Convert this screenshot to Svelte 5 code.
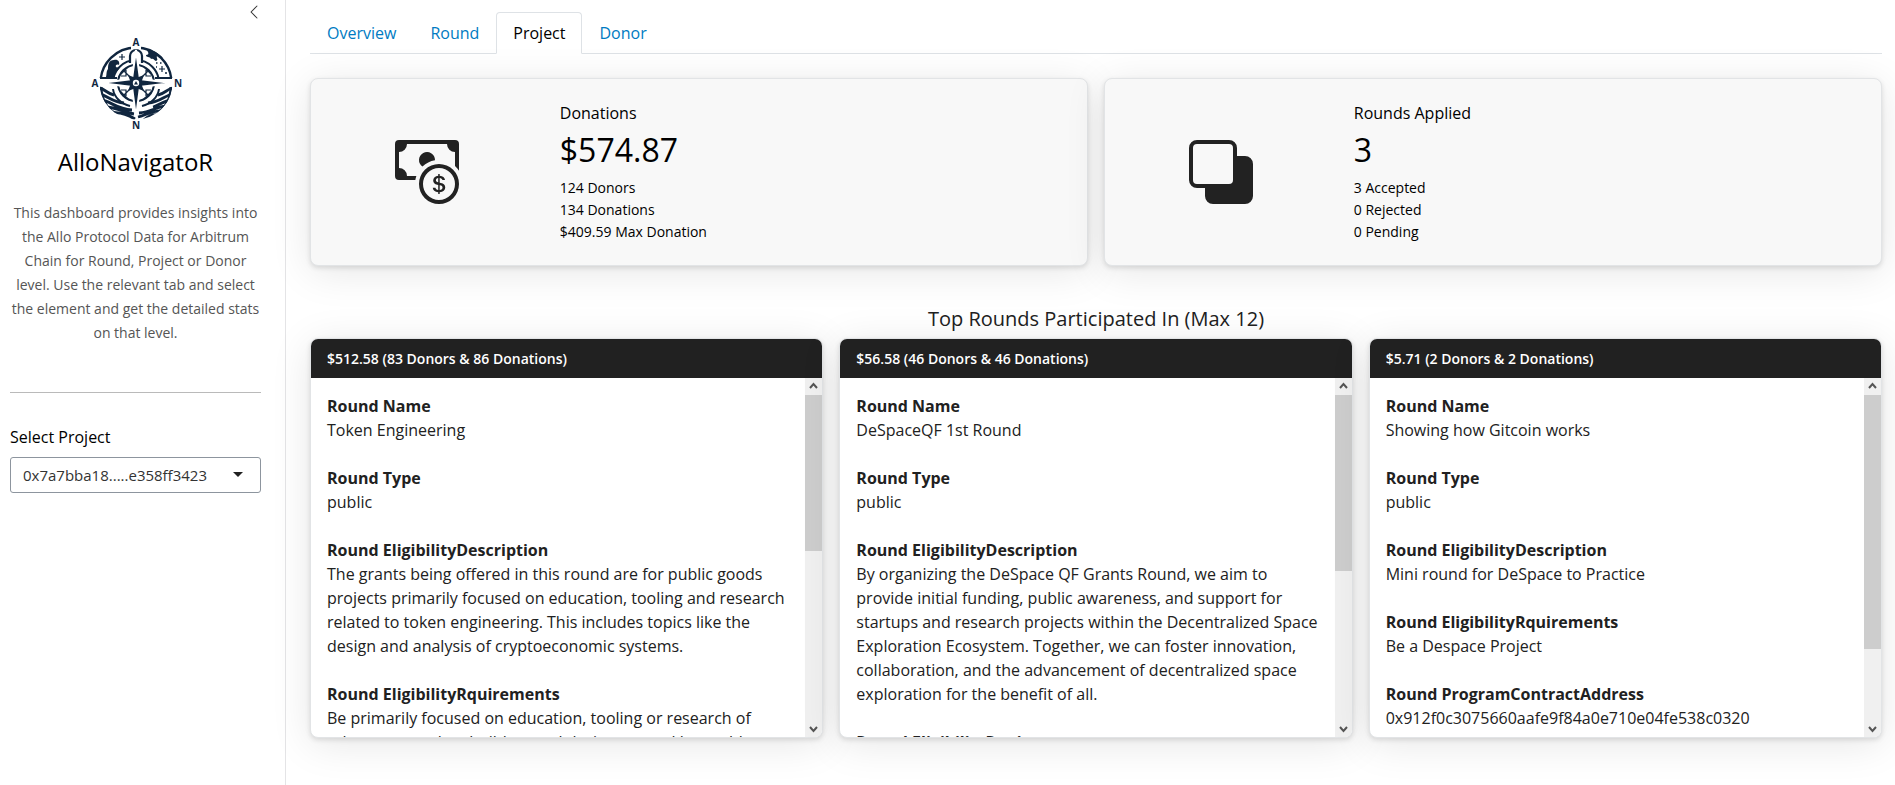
<script>
  const tabs = ['Overview', 'Round', 'Project', 'Donor'];
  let active = $state('Project');
  let project = $state('0x7a7bba18.....e358ff3423');

  const stats = [
    {
      title: 'Donations',
      value: '$574.87',
      notes: ['124 Donors', '134 Donations', '$409.59 Max Donation'],
      icon: 'cash'
    },
    {
      title: 'Rounds Applied',
      value: '3',
      notes: ['3 Accepted', '0 Rejected', '0 Pending'],
      icon: 'stack'
    }
  ];

  const rounds = [
    {
      head: '$512.58 (83 Donors & 86 Donations)',
      thumb: 48,
      fields: [
        ['Round Name', 'Token Engineering'],
        ['Round Type', 'public'],
        ['Round EligibilityDescription', 'The grants being offered in this round are for public goods projects primarily focused on education, tooling and research related to token engineering. This includes topics like the design and analysis of cryptoeconomic systems.'],
        ['Round EligibilityRquirements', 'Be primarily focused on education, tooling or research of relevance to token builders and designers, and be usable']
      ]
    },
    {
      head: '$56.58 (46 Donors & 46 Donations)',
      thumb: 54,
      fields: [
        ['Round Name', 'DeSpaceQF 1st Round'],
        ['Round Type', 'public'],
        ['Round EligibilityDescription', 'By organizing the DeSpace QF Grants Round, we aim to provide initial funding, public awareness, and support for startups and research projects within the Decentralized Space Exploration Ecosystem. Together, we can foster innovation, collaboration, and the advancement of decentralized space exploration for the benefit of all.'],
        ['Round EligibilityRquirements', '']
      ]
    },
    {
      head: '$5.71 (2 Donors & 2 Donations)',
      thumb: 78,
      fields: [
        ['Round Name', 'Showing how Gitcoin works'],
        ['Round Type', 'public'],
        ['Round EligibilityDescription', 'Mini round for DeSpace to Practice'],
        ['Round EligibilityRquirements', 'Be a Despace Project'],
        ['Round ProgramContractAddress', '0x912f0c3075660aafe9f84a0e710e04fe538c0320']
      ]
    }
  ];
</script>

<div class="page">
  <aside>
    <button class="collapse" aria-label="Toggle sidebar">
      <svg width="16" height="16" viewBox="0 0 16 16" fill="currentColor">
        <path fill-rule="evenodd" d="M11.354 1.646a.5.5 0 0 1 0 .708L5.707 8l5.647 5.646a.5.5 0 0 1-.708.708l-6-6a.5.5 0 0 1 0-.708l6-6a.5.5 0 0 1 .708 0" />
      </svg>
    </button>

    <svg class="logo" width="96" height="96" viewBox="-48 -48 96 96" fill="none" stroke="#10263f" aria-label="AlloNavigatoR logo">
      <defs>
        <clipPath id="upper"><path d="M-38 -5V-38H-5V-30H5V-38H38V-5Z" /></clipPath>
        <clipPath id="disc"><circle r="36.5" /></clipPath>
      </defs>
      <!-- sky half -->
      <g clip-path="url(#upper)">
        <circle r="35.500" stroke-width="2.400" />
        <circle r="23" stroke-width="2" />
        <path d="M-30 -6c1-4 0-5 2-8 0-5 1-9 6-9 4-1 6 2 5 5-2-1-4 0-3 2 1 1 3 0 4-1-1 5-6 6-7 12Z" fill="#10263f" stroke="none" />
        <path d="M10 -34c7 1 13 4 17 9-3 0-3-3-6-2-1 2 2 4-1 5-2 0-2-3-5-2-1-3-5-1-5-4 2 0 3-1 2-3Z" fill="#10263f" stroke="none" />
      </g>
      <path d="M-36 -5H-19M19 -5H36" stroke-width="2" />
      <path d="M-14 -29v6M-17 -26h6M26 -17v6M23 -14h6" stroke-width="1.2" />
      <path d="M20 -20h1.5M24 -20h1.5M29 -10h2M20 -16h1" stroke-width="1.5" />
      <!-- sea half -->
      <g clip-path="url(#disc)">
        <path d="M-36 5C-30 7-28 11-22 12M-36 11C-28 13-24 19-12 20M-35 17C-25 18-20 26-4 27M-31 24C-20 24-12 29-2 31M-24 30C-16 29-9 31-1 36" stroke-width="3" />
        <path d="M36 5C30 7 28 11 22 12M36 11C28 13 24 19 12 20M36 17C26 18 22 23 17 24M34 23C22 22 17 29 3 30M27 28C17 27 10 32 2 34M24 32C17 31 12 33 8 37" stroke-width="2.8" />
        <path d="M-35 4C-35 15-29 27-21 30M35 4C35 16 29 26 21 30" stroke-width="3" />
      </g>
      <path d="M-23 6C-22 14-15 21-6 23M23 6C22 14 15 21 6 23" stroke-width="2" />
      <!-- compass housing -->
      <circle r="18" stroke-width="2" />
      <path d="M-6 -20V-27A6 6 0 0 1 6 -27V-20" fill="#fff" stroke-width="2.2" />
      <path d="M-12 -12L12 12M12 -12L-12 12M-16 -8L-8 -16M16 -8L8 -16M-16 8L-8 16M16 8L8 16M-10 -13V-7H-15M10 -13V-7H15M-10 13V7H-15M10 13V7H15" stroke-width="1.2" />
      <path d="M0 -33L4 -4L36 0L4 4L0 34L-4 4L-36 0L-4 -4Z" fill="#10263f" stroke="#fff" stroke-width="2" />
      <path d="M-8 -8L0 -5L8 -8L5 0L8 8L0 5L-8 8L-5 0Z" fill="#10263f" stroke="none" />
      <circle r="3.2" fill="#fff" stroke="none" />
      <path d="M0 -2L2 1.4H-2Z" fill="#10263f" stroke="none" />
      <g class="points" fill="#10263f" stroke="none" text-anchor="middle">
        <text x="0" y="-37">A</text>
        <text x="-41" y="4">A</text>
        <text x="42" y="4">N</text>
        <text x="0" y="46">N</text>
      </g>
    </svg>

    <h1>AlloNavigatoR</h1>
    <p class="intro">
      This dashboard provides insights into the Allo Protocol Data for Arbitrum Chain for Round, Project or Donor level. Use the relevant tab and select the element and get the detailed stats on that level.
    </p>
    <hr />
    <label for="project">Select Project</label>
    <div class="picker">
      <select id="project" bind:value={project}>
        <option>0x7a7bba18.....e358ff3423</option>
      </select>
      <svg width="10" height="5" viewBox="0 0 10 5"><path d="M0 0H10L5 5Z" fill="#212121" /></svg>
    </div>
  </aside>

  <main>
    <nav>
      {#each tabs as tab}
        <a href="#{tab.toLowerCase()}" class:active={tab === active} onclick={() => (active = tab)}>{tab}</a>
      {/each}
    </nav>

    <section class="stats">
      {#each stats as stat}
        <article class="card stat">
          <div class="icon">
            <svg width="64" height="64" viewBox="0 0 16 16" fill="#222" aria-hidden="true">
              {#if stat.icon === 'cash'}
                <path fill-rule="evenodd" d="M11 15a4 4 0 1 0 0-8 4 4 0 0 0 0 8m5-4a5 5 0 1 1-10 0 5 5 0 0 1 10 0" />
                <path d="M9.438 11.944c.047.596.518 1.06 1.363 1.116v.44h.375v-.443c.875-.061 1.386-.529 1.386-1.207 0-.618-.39-.936-1.09-1.1l-.296-.07v-1.2c.376.043.614.248.671.532h.658c-.047-.575-.54-1.024-1.329-1.073V8.5h-.375v.45c-.747.073-1.255.522-1.255 1.158 0 .562.378.92 1.007 1.066l.248.061v1.272c-.384-.058-.639-.27-.696-.563h-.668zm1.36-1.354c-.369-.085-.569-.26-.569-.522 0-.294.216-.514.572-.578v1.1zm.432.746c.449.104.655.272.655.569 0 .339-.257.571-.709.614v-1.195z" />
                <path d="M1 0a1 1 0 0 0-1 1v8a1 1 0 0 0 1 1h4.083q.088-.517.258-1H3a2 2 0 0 0-2-2V3a2 2 0 0 0 2-2h10a2 2 0 0 0 2 2v3.528c.38.34.717.728 1 1.154V1a1 1 0 0 0-1-1z" />
                <path d="M9.998 5.083 10 5a2 2 0 1 0-3.132 1.65 6 6 0 0 1 3.13-1.567" />
              {:else}
                <path fill-rule="evenodd" d="M0 2a2 2 0 0 1 2-2h8a2 2 0 0 1 2 2v2h2a2 2 0 0 1 2 2v8a2 2 0 0 1-2 2H6a2 2 0 0 1-2-2v-2H2a2 2 0 0 1-2-2zm2-1a1 1 0 0 0-1 1v8a1 1 0 0 0 1 1h8a1 1 0 0 0 1-1V2a1 1 0 0 0-1-1z" />
              {/if}
            </svg>
          </div>
          <div class="figures">
            <p class="title">{stat.title}</p>
            <p class="value">{stat.value}</p>
            {#each stat.notes as note}
              <p class="note">{note}</p>
            {/each}
          </div>
        </article>
      {/each}
    </section>

    <h2>Top Rounds Participated In (Max 12)</h2>

    <section class="rounds">
      {#each rounds as round}
        <article class="card round">
          <header>{round.head}</header>
          <div class="body">
            <dl>
              {#each round.fields as [name, text]}
                <dt>{name}</dt>
                <dd>{text}</dd>
              {/each}
            </dl>
            <div class="bar" aria-hidden="true">
              <svg width="17" height="17" viewBox="0 0 17 17"><path d="M5 10L8.500 6L12 10" /></svg>
              <div class="track"><div class="thumb" style="height: {round.thumb}%"></div></div>
              <svg width="17" height="17" viewBox="0 0 17 17"><path d="M5 7L8.500 11L12 7" /></svg>
            </div>
          </div>
        </article>
      {/each}
    </section>
  </main>
</div>

<style>
  :global(body) {
    margin: 0;
    background: #fff;
    color: #212121;
    font: 16px/24px 'Open Sans', sans-serif;
  }
  .page {
    display: grid;
    grid-template-columns: 286px minmax(0, 1fr);
    min-height: 100vh;
    overflow: hidden;
  }
  p, h1, h2, dl, dd {
    margin: 0;
  }

  aside {
    box-sizing: border-box;
    display: flex;
    flex-direction: column;
    padding: 4px 24px 24px 10px;
    border-right: 1px solid #e4e4e6;
    color: #000;
  }
  .collapse {
    align-self: flex-end;
    display: flex;
    margin-right: -1px;
    padding: 0;
    border: 0;
    background: none;
    color: #333;
  }
  .logo {
    align-self: center;
    margin-top: 15px;
  }
  .points {
    font: 700 10px 'Open Sans', sans-serif;
  }
  h1 {
    margin-top: 16px;
    font-size: 24px;
    font-weight: 400;
    line-height: 30px;
    text-align: center;
  }
  .intro {
    margin-top: 24px;
    color: #555;
    font-size: 14px;
    text-align: center;
  }
  hr {
    width: 100%;
    margin: 47px 0 32px;
    border: 0;
    border-top: 1px solid #bababa;
  }
  .picker {
    position: relative;
    margin-top: 8px;
  }
  select {
    appearance: none;
    display: block;
    width: 100%;
    height: 36px;
    padding: 0 30px 0 12px;
    border: 1px solid #8d959e;
    border-radius: 3px;
    background: #fff;
    color: #333;
    font: 15px/24px 'Open Sans', sans-serif;
  }
  .picker svg {
    position: absolute;
    top: 15px;
    right: 18px;
    pointer-events: none;
  }

  main {
    padding: 12px 13px 24px 24px;
  }
  nav {
    display: flex;
    border-bottom: 1px solid #dee2e6;
  }
  nav a {
    margin-bottom: -1px;
    padding: 8px 16px;
    border: 1px solid transparent;
    border-radius: 4px 4px 0 0;
    color: #007bc2;
    text-decoration: none;
  }
  nav a.active {
    border-color: #dee2e6 #dee2e6 #fff;
    background: #fff;
    color: #000;
  }

  .card {
    border: 1px solid #e2e4e6;
    border-radius: 8px;
    box-shadow: 0 2px 5px rgba(0, 0, 0, 0.12), 0 6px 40px rgba(0, 0, 0, 0.1);
  }
  .stats {
    display: grid;
    grid-template-columns: 1fr 1fr;
    gap: 16px;
    margin-top: 24px;
  }
  .stat {
    display: grid;
    grid-template-columns: 3fr 7fr;
    align-items: center;
    min-height: 186px;
    background: #f8f8f8;
    color: #000;
  }
  .icon {
    display: grid;
    place-items: center;
  }
  .figures {
    padding: 16px;
  }
  .value {
    margin: 6px 0 8px;
    font-size: 32px;
    line-height: 38px;
  }
  .note {
    font-size: 14px;
    font-weight: 500;
    line-height: 22px;
  }

  h2 {
    margin-top: 41px;
    font-size: 20px;
    font-weight: 400;
    line-height: 24px;
    text-align: center;
  }
  .rounds {
    display: grid;
    grid-template-columns: repeat(3, minmax(0, 1fr));
    gap: 16px;
    margin-top: 7px;
  }
  .round {
    overflow: hidden;
    background: #fff;
  }
  header {
    padding: 9px 16px 8px;
    background: #212121;
    color: #fff;
    font-size: 14px;
    font-weight: 600;
    line-height: 22px;
  }
  .body {
    display: flex;
    height: 359px;
  }
  dl {
    flex: 1;
    box-sizing: border-box;
    padding: 16px;
    overflow-y: auto;
    scrollbar-width: none;
  }
  dt {
    font-weight: 700;
  }
  dd {
    margin-bottom: 24px;
  }
  .bar {
    display: flex;
    flex-direction: column;
    width: 17px;
    background: #f0f0f0;
  }
  .bar path {
    fill: none;
    stroke: #555;
    stroke-width: 2;
  }
  .track {
    flex: 1;
  }
  .thumb {
    background: #cdcdcd;
  }
</style>
